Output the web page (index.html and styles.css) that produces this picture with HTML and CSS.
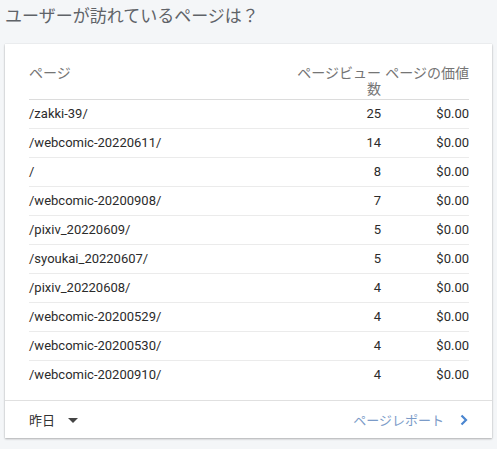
FILE: index.html
```html
<!DOCTYPE html>
<html lang="ja">
<head>
<meta charset="utf-8">
<link rel="stylesheet" href="styles.css">
</head>
<body>
<h2 class="title">ユーザーが訪れているページは？</h2>
<div class="card">
  <div class="card-body">
    <table class="data">
      <thead>
        <tr>
          <th class="col-page">ページ</th>
          <th class="col-num">ページビュー数</th>
          <th class="col-val">ページの価値</th>
        </tr>
      </thead>
      <tbody>
        <tr><td>/zakki-39/</td><td class="num">25</td><td class="num">$0.00</td></tr>
        <tr><td>/webcomic-20220611/</td><td class="num">14</td><td class="num">$0.00</td></tr>
        <tr><td>/</td><td class="num">8</td><td class="num">$0.00</td></tr>
        <tr><td>/webcomic-20200908/</td><td class="num">7</td><td class="num">$0.00</td></tr>
        <tr><td>/pixiv_20220609/</td><td class="num">5</td><td class="num">$0.00</td></tr>
        <tr><td>/syoukai_20220607/</td><td class="num">5</td><td class="num">$0.00</td></tr>
        <tr><td>/pixiv_20220608/</td><td class="num">4</td><td class="num">$0.00</td></tr>
        <tr><td>/webcomic-20200529/</td><td class="num">4</td><td class="num">$0.00</td></tr>
        <tr><td>/webcomic-20200530/</td><td class="num">4</td><td class="num">$0.00</td></tr>
        <tr><td>/webcomic-20200910/</td><td class="num">4</td><td class="num">$0.00</td></tr>
      </tbody>
    </table>
  </div>
  <div class="card-footer">
    <div class="range">昨日<span class="caret"></span></div>
    <a class="report">ページレポート<svg class="chev" width="8" height="12" viewBox="0 0 8 12"><path d="M1.5 1.5 L6 6 L1.5 10.5" fill="none" stroke="#4a86d0" stroke-width="2.2"/></svg></a>
  </div>
</div>
</body>
</html>
```
FILE: styles.css
```css
html, body {
  margin: 0;
  padding: 0;
}
body {
  background: #f4f6f8;
  font-family: Roboto, "Noto Sans CJK JP", sans-serif;
  width: 497px;
  height: 449px;
  overflow: hidden;
}
.title {
  margin: 0;
  padding: 3px 0 0 5px;
  height: 42px;
  box-sizing: border-box;
  font-size: 17px;
  font-weight: 400;
  line-height: 24px;
  color: #5f6368;
  font-family: "Noto Sans CJK JP", sans-serif;
}
.card {
  margin: 0 5px;
  background: #fff;
  box-shadow: 0 1px 2px rgba(0, 0, 0, 0.28), 0 0 1px rgba(0, 0, 0, 0.12);
  height: 394px;
  margin-top: 2px;
}
.card-body {
  padding: 20px 23px 11px 24px;
}
.data {
  width: 440px;
  border-collapse: collapse;
  table-layout: fixed;
}
.data th {
  font-weight: 400;
  font-size: 14px;
  line-height: 16px;
  color: #757575;
  font-family: "Noto Sans CJK JP", sans-serif;
  padding: 0 0 3px 0;
  vertical-align: top;
  border-bottom: 1px solid #dcdcdc;
}
.col-page { text-align: left; }
.col-num { width: 86px; text-align: right; }
.col-val { width: 88px; text-align: right; }
.data td {
  font-size: 13px;
  color: #2b2b2b;
  height: 28px;
  padding: 0;
  line-height: 28px;
  border-bottom: 1px solid #ebebeb;
  white-space: nowrap;
}
.data tbody tr:last-child td {
  border-bottom: none;
}
.data td.num {
  text-align: right;
}
.card-footer {
  border-top: 1px solid #e0e0e0;
  height: 37px;
  display: flex;
  align-items: center;
  justify-content: space-between;
  padding: 0 24px 0 24px;
  font-family: "Noto Sans CJK JP", sans-serif;
  font-size: 13px;
}
.range {
  color: #333;
  display: flex;
  align-items: center;
}
.caret {
  display: inline-block;
  width: 0;
  height: 0;
  border-left: 5px solid transparent;
  border-right: 5px solid transparent;
  border-top: 5px solid #444;
  margin-left: 13px;
  margin-top: 2px;
}
.report {
  color: #7b9bc8;
  display: flex;
  align-items: center;
}
.chev {
  margin-left: 16px;
}
```
